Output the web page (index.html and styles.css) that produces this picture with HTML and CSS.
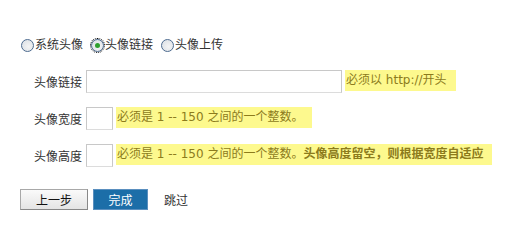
FILE: index.html
```html
<!DOCTYPE html>
<html lang="zh-CN">
<head>
<meta charset="UTF-8">
<title>头像设置</title>
<link rel="stylesheet" href="styles.css">
</head>
<body>
    <div class="panel">
        <div class="types">
            <label class="type"><span class="radio"></span>系统头像</label>
            <label class="type active"><span class="radio checked"></span>头像链接</label>
            <label class="type"><span class="radio"></span>头像上传</label>
        </div>

        <div class="row">
            <span class="label">头像链接</span>
            <input class="field wide" type="text">
            <span class="hint">必须以 http://开头</span>
        </div>
        <div class="row">
            <span class="label">头像宽度</span>
            <input class="field small" type="text">
            <span class="hint">必须是 1 -- 150 之间的一个整数。</span>
        </div>
        <div class="row">
            <span class="label">头像高度</span>
            <input class="field small" type="text">
            <span class="hint">必须是 1 -- 150 之间的一个整数。<b>头像高度留空，则根据宽度自适应</b></span>
        </div>

        <div class="actions">
            <button class="btn prev" type="button">上一步</button>
            <button class="btn done" type="button">完成</button>
            <a class="skip" href="#">跳过</a>
        </div>
    </div>
</body>
</html>
```

FILE: styles.css
```css
body, html {
    margin: 0;
    padding: 0;
    background: #fff;
}

body {
    font-family: "Open Sans", "Noto Sans CJK SC", sans-serif;
    font-size: 12px;
    color: #333;
}

.panel {
    padding: 37px 0 0 20px;
}

.types {
    display: flex;
    align-items: center;
    height: 16px;
}

.type {
    display: flex;
    align-items: center;
    margin-right: 7px;
    line-height: 16px;
    color: #333;
}

.radio {
    position: relative;
    display: inline-block;
    box-sizing: border-box;
    width: 13px;
    height: 13px;
    margin: 0 1px 0 1px;
    border: 1px solid #4d6b8f;
    border-radius: 50%;
    background: radial-gradient(circle at 60% 60%, #f4f4f4, #d8dde3);
}

.radio.checked::after {
    content: "";
    position: absolute;
    left: 3px;
    top: 3px;
    width: 5px;
    height: 5px;
    border-radius: 50%;
    background: #2ea02e;
}

.type.active .radio {
    outline: 1px dotted #000;
    outline-offset: 0;
}

.row {
    display: flex;
    align-items: center;
    height: 23px;
    margin-top: 14px;
}

.types + .row {
    margin-top: 17px;
}

.label {
    width: 62px;
    padding-right: 4px;
    text-align: right;
}

.field {
    box-sizing: border-box;
    height: 23px;
    margin: 0;
    border: 1px solid #c8c8c8;
    border-bottom-color: #dcdcdc;
    background: #fff;
    outline: none;
}

.field.wide {
    width: 256px;
}

.field.small {
    width: 27px;
}

.hint {
    margin: -3px 0 0 3px;
    padding: 0 9px 0 1px;
    font-family: "DejaVu Sans", "Noto Sans CJK SC", sans-serif;
    line-height: 21px;
    background: #fdf98e;
    color: #8c7b1c;
}

.hint b {
    font-weight: bold;
}

.actions {
    display: flex;
    align-items: center;
    margin-top: 22px;
}

.btn {
    box-sizing: border-box;
    height: 21px;
    margin: 0 5px 0 0;
    padding: 0;
    font-family: inherit;
    font-size: 12px;
    cursor: pointer;
}

.prev {
    width: 68px;
    border: 1px solid #a8a8a8;
    border-right-color: #888;
    border-bottom-color: #888;
    background: linear-gradient(#fafafa, #e4e4e4);
    color: #111;
}

.done {
    width: 55px;
    border: 1px solid #5a8fbf;
    background: #1c6ea8;
    color: #fff;
}

.skip {
    margin-left: 11px;
    color: #333;
    text-decoration: none;
}
```
